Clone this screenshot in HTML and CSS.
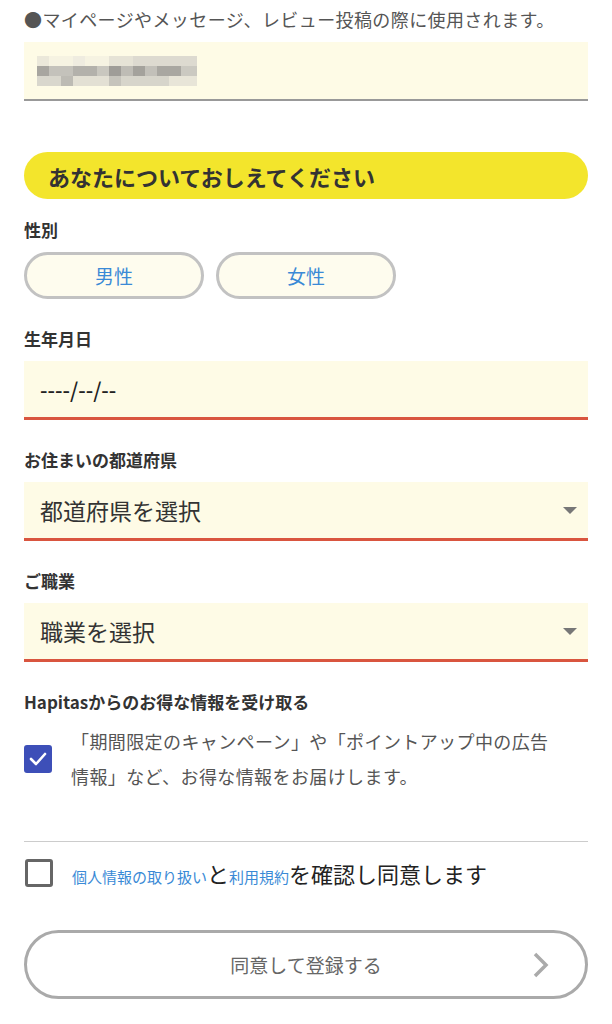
FILE: index.html
```html
<!DOCTYPE html>
<html lang="ja">
<head>
  <meta charset="UTF-8" />
  <meta name="viewport" content="width=device-width, initial-scale=1.0" />
  <title>会員登録</title>
  <link rel="stylesheet" href="styles.css">
</head>
<body>

  <p class="note">●マイページやメッセージ、レビュー投稿の際に使用されます。</p>
  <div class="input input-mail">
    <!-- ぼかし済みのメールアドレス -->
    <svg class="blur" width="160" height="30" viewBox="0 0 160 30">
      <rect x="0" y="0" width="160" height="30" fill="#f6f3e2"/>
      <rect x="0" y="0" width="12" height="10" fill="#ebe8da"/>
      <rect x="36" y="0" width="12" height="10" fill="#efece0"/>
      <rect x="72" y="0" width="24" height="10" fill="#e6e3d6"/>
      <rect x="96" y="0" width="64" height="10" fill="#dddad0"/>
      <rect x="0" y="10" width="12" height="10" fill="#a8a6a0"/>
      <rect x="12" y="10" width="24" height="10" fill="#c4c2bb"/>
      <rect x="36" y="10" width="24" height="10" fill="#b3b1ab"/>
      <rect x="60" y="10" width="12" height="10" fill="#c9c7bf"/>
      <rect x="72" y="10" width="12" height="10" fill="#9f9d98"/>
      <rect x="84" y="10" width="12" height="10" fill="#bebcb5"/>
      <rect x="96" y="10" width="12" height="10" fill="#a4a29c"/>
      <rect x="108" y="10" width="12" height="10" fill="#c2c0b9"/>
      <rect x="120" y="10" width="24" height="10" fill="#a9a7a1"/>
      <rect x="144" y="10" width="16" height="10" fill="#cbc9c1"/>
      <rect x="0" y="20" width="24" height="10" fill="#d9d7cd"/>
      <rect x="24" y="20" width="12" height="10" fill="#bdbbb4"/>
      <rect x="36" y="20" width="36" height="10" fill="#e3e0d4"/>
      <rect x="72" y="20" width="12" height="10" fill="#c6c4bc"/>
      <rect x="84" y="20" width="48" height="10" fill="#d7d5cb"/>
      <rect x="132" y="20" width="28" height="10" fill="#e8e5d8"/>
    </svg>
  </div>

  <h2 class="section-title">あなたについておしえてください</h2>

  <div class="field field-first">
    <div class="label">性別</div>
    <div class="gender">
      <button class="gender-btn">男性</button>
      <button class="gender-btn">女性</button>
    </div>
  </div>

  <div class="field">
    <div class="label">生年月日</div>
    <div class="input input-error input-date">----/--/--</div>
  </div>

  <div class="field">
    <div class="label">お住まいの都道府県</div>
    <div class="input input-error select">
      <span>都道府県を選択</span>
      <span class="arrow"></span>
    </div>
  </div>

  <div class="field">
    <div class="label">ご職業</div>
    <div class="input input-error select">
      <span>職業を選択</span>
      <span class="arrow"></span>
    </div>
  </div>

  <div class="field">
    <div class="label">Hapitasからのお得な情報を受け取る</div>
    <div class="optin">
      <span class="check checked">
        <svg width="20" height="16" viewBox="0 0 20 16"><polyline points="3,8 8,13 17,3" fill="none" stroke="#fff" stroke-width="2.6" stroke-linecap="round" stroke-linejoin="round"/></svg>
      </span>
      <p>「期間限定のキャンペーン」や「ポイントアップ中の広告<br>情報」など、お得な情報をお届けします。</p>
    </div>
  </div>

  <hr class="divider">

  <div class="agree">
    <span class="check"></span>
    <p><a href="#">個人情報の取り扱い</a>と<a href="#">利用規約</a>を確認し同意します</p>
  </div>

  <button class="submit">
    同意して登録する
    <svg class="chevron" width="20" height="28" viewBox="0 0 20 28"><polyline points="4,3 15,14 4,25" fill="none" stroke="#aaa" stroke-width="3.5"/></svg>
  </button>

</body>
</html>
```

FILE: styles.css
```css
* { box-sizing: border-box; margin: 0; padding: 0; }
body {
  background: #fff;
  font-family: "Noto Sans CJK JP", "Noto Sans", sans-serif;
  color: #333;
  padding: 5px 24px 0;
}
.note {
  font-size: 18px;
  line-height: 28px;
  color: #555;
  letter-spacing: 0.4px;
  margin-bottom: 9px;
}
.input {
  height: 59px;
  background: #fefbe6;
  display: flex;
  align-items: center;
  padding: 0 16px;
  font-size: 19px;
  color: #333;
}
.input-mail {
  padding-left: 13px;
  border-bottom: 2px solid #999;
}
.input-error { border-bottom: 3px solid #d9553f; }
.input-date {
  font-size: 21px;
  font-weight: 500;
  color: #222;
}
.select {
  justify-content: space-between;
  font-size: 23px;
  padding-right: 11px;
}
.arrow {
  width: 0;
  height: 0;
  border-left: 7px solid transparent;
  border-right: 7px solid transparent;
  border-top: 7px solid #777;
}
.section-title {
  margin-top: 51px;
  height: 47px;
  border-radius: 24px;
  background: #f3e52c;
  font-size: 22px;
  font-weight: bold;
  color: #333;
  display: flex;
  align-items: center;
  padding-left: 24px;
}
.field { margin-top: 28px; }
.field-first { margin-top: 19px; }
.label {
  font-size: 17px;
  font-weight: bold;
  line-height: 24px;
  color: #333;
  margin-bottom: 10px;
}
.gender { display: flex; gap: 12px; }
.gender-btn {
  width: 180px;
  height: 47px;
  border: 3px solid #c2c2c2;
  border-radius: 24px;
  background: #fefcee;
  color: #3a8ad6;
  font-family: inherit;
  font-size: 19px;
}
.optin {
  display: flex;
  align-items: center;
  gap: 19px;
  margin-top: 8px;
}
.optin p {
  font-size: 18px;
  line-height: 35px;
  color: #555;
  letter-spacing: 0.4px;
  white-space: nowrap;
}
.check {
  flex: none;
  width: 28px;
  height: 28px;
  border: 3px solid #666;
  border-radius: 3px;
  background: #fff;
  display: flex;
  align-items: center;
  justify-content: center;
}
.check.checked {
  background: #3d4fb8;
  border-color: #3d4fb8;
}
.divider {
  border: none;
  border-top: 1px solid #ccc;
  margin-top: 47px;
}
.agree {
  display: flex;
  align-items: center;
  gap: 19px;
  margin-top: 15px;
  margin-left: 1px;
}
.agree p {
  font-size: 22px;
  color: #222;
}
.agree a {
  font-size: 15px;
  color: #3a8ad6;
  text-decoration: none;
}
.submit {
  position: relative;
  width: 100%;
  height: 69px;
  margin-top: 41px;
  border: 3px solid #aaa;
  border-radius: 35px;
  background: #fff;
  color: #666;
  font-family: inherit;
  font-size: 19px;
}
.chevron {
  position: absolute;
  right: 34px;
  top: 18px;
}
```
